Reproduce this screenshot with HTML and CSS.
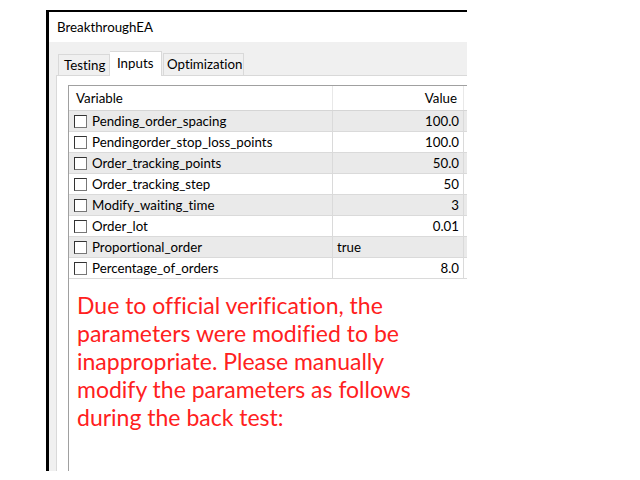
FILE: index.html
```html
<!DOCTYPE html>
<html>

<head>
  <meta charset="UTF-8">
  <meta name="viewport" content="width=device-width, initial-scale=1">
  <title>BreakthroughEA</title>
  <link rel="stylesheet" href="styles.css">
</head>

<body>
  <div class="window">
    <div class="title">BreakthroughEA</div>
    <div class="frame">
      <div class="tabs">
        <div class="tab tab-testing">Testing</div>
        <div class="tab tab-active">Inputs</div>
        <div class="tab tab-opt">Optimization</div>
      </div>
      <div class="panel">
        <div class="grid">
          <div class="head">
            <div class="cell name">Variable</div>
            <div class="cell value">Value</div>
          </div>
          <div class="row odd">
            <div class="cell name"><span class="check"></span>Pending_order_spacing</div>
            <div class="cell value">100.0</div>
          </div>
          <div class="row">
            <div class="cell name"><span class="check"></span>Pendingorder_stop_loss_points</div>
            <div class="cell value">100.0</div>
          </div>
          <div class="row odd">
            <div class="cell name"><span class="check"></span>Order_tracking_points</div>
            <div class="cell value">50.0</div>
          </div>
          <div class="row">
            <div class="cell name"><span class="check"></span>Order_tracking_step</div>
            <div class="cell value">50</div>
          </div>
          <div class="row odd">
            <div class="cell name"><span class="check"></span>Modify_waiting_time</div>
            <div class="cell value">3</div>
          </div>
          <div class="row">
            <div class="cell name"><span class="check"></span>Order_lot</div>
            <div class="cell value">0.01</div>
          </div>
          <div class="row odd">
            <div class="cell name"><span class="check"></span>Proportional_order</div>
            <div class="cell value text">true</div>
          </div>
          <div class="row">
            <div class="cell name"><span class="check"></span>Percentage_of_orders</div>
            <div class="cell value">8.0</div>
          </div>
          <p class="note">Due to official verification, the<br>parameters were modified to be<br>inappropriate. Please manually<br>modify the parameters as follows<br>during the back test:</p>
        </div>
      </div>
    </div>
  </div>
</body>

</html>
```

FILE: styles.css
```css
*{
  padding: 0;
  margin: 0;
  box-sizing: border-box;
}

body{
  background: #fff;
  font-family: "Lato", "Noto Sans", sans-serif;
  font-size: 13.3px;
  color: #000;
  font-variant-ligatures: none;
}

.window{
  width: 421px;
  height: 461px;
  margin: 10px 0 0 46px;
  border-top: 2px solid #000;
  border-left: 3px solid #000;
  overflow: hidden;
  display: flex;
  flex-direction: column;
}

.title{
  height: 30px;
  line-height: 30px;
  padding-left: 8px;
  background: #fff;
}

.frame{
  flex: 1;
  display: flex;
  flex-direction: column;
  background: #f0f0f0;
  padding: 9px 0 0 7px;
}

.tabs{
  display: flex;
  align-items: flex-end;
  height: 24px;
  padding-left: 2px;
}

.tab{
  border: 1px solid #d9d9d9;
  border-bottom: none;
  background: #f0f0f0;
  padding-left: 5px;
  line-height: 20px;
}
.tab-testing{
  width: 52px;
  height: 21px;
}
.tab-active{
  width: 52px;
  background: #fff;
  border-left: none;
  line-height: 22px;
  padding-left: 7px;
  margin-bottom: -1px;
  height: 25px;
  position: relative;
}
.tab-opt{
  width: 81px;
  height: 22px;
  margin-left: 1px;
  padding-left: 3px;
}

.panel{
  flex: 1;
  background: #fff;
  border-top: 1px solid #d9d9d9;
  border-left: 1px solid #d9d9d9;
  padding: 9px 0 0 11px;
  display: flex;
}

.grid{
  flex: 1;
  border-top: 1px solid #a0a0a0;
  border-left: 1px solid #a0a0a0;
}

.head,
.row{
  display: grid;
  grid-template-columns: 263px 132px;
}
.head{
  height: 25px;
  border-bottom: 1px solid #d5d5d5;
}
.row{
  height: 21px;
  border-bottom: 1px solid #dadada;
}
.row.odd{
  background: #eaeaea;
}

.cell{
  display: flex;
  align-items: center;
  white-space: nowrap;
}
.name{
  padding-left: 5px;
}
.head .name{
  padding-left: 7px;
}
.value{
  justify-content: flex-end;
  padding-right: 4px;
  border-left: 1px solid #dadada;
  border-right: 1px solid #dadada;
}
.head .value{
  border-left: 1px solid #e8e8e8;
  border-right: 1px solid #e8e8e8;
  padding-right: 6px;
}
.value.text{
  justify-content: flex-start;
  padding-left: 4px;
}

.check{
  width: 13px;
  height: 13px;
  margin-right: 5px;
  background: #fff;
  border: 1px solid #333;
  border-right-color: #777;
  border-bottom-color: #777;
}

.note{
  color: #ff2020;
  font-size: 23px;
  line-height: 28px;
  padding: 12px 0 0 8px;
}
```
